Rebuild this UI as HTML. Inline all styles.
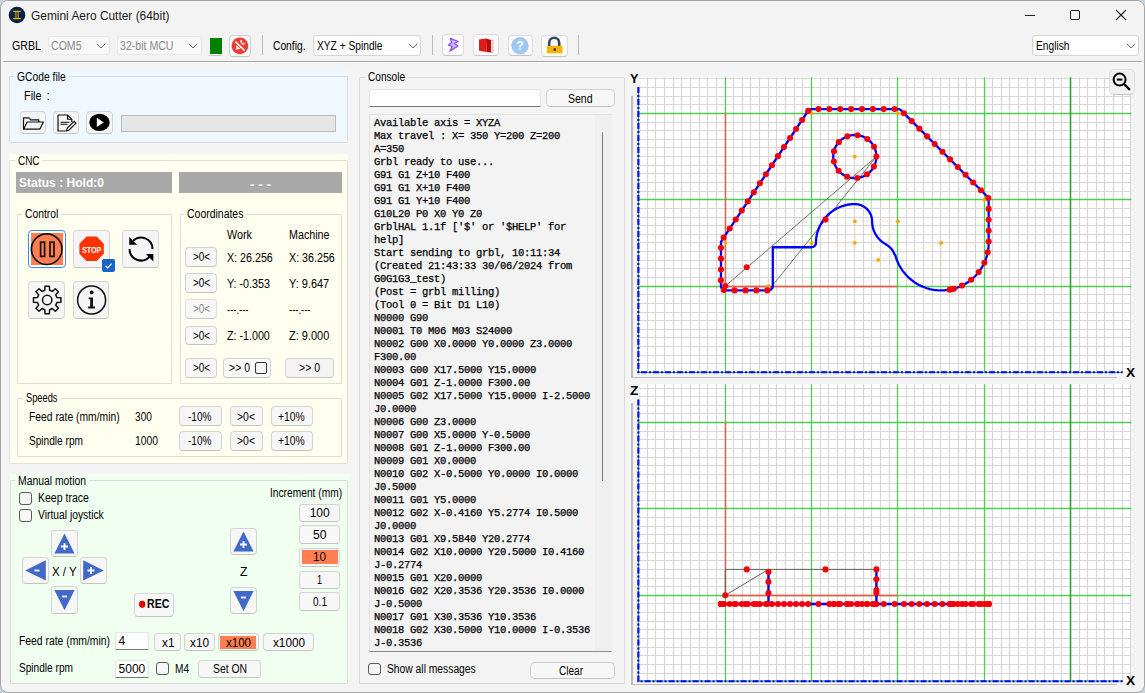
<!DOCTYPE html>
<html><head><meta charset="utf-8"><style>
html,body{margin:0;padding:0;}
body{width:1145px;height:693px;overflow:hidden;position:relative;background:#5a6a7a;font-family:"Liberation Sans",sans-serif;}
.t{position:absolute;white-space:pre;transform-origin:0 0;}
svg{overflow:visible}
</style></head><body>
<div style="position:absolute;left:0.00px;top:0.00px;width:1145.00px;height:693.00px;background:#c9d3dc;"></div>
<div style="position:absolute;left:0.00px;top:0.00px;width:1145.00px;height:693.00px;box-sizing:border-box;background:#f4f4f4;border:1px solid #a4a4a4;border-radius:8px;"></div>
<div style="position:absolute;left:1.00px;top:1.00px;width:1143.00px;height:60.00px;background:#f3f3f3;border-radius:7px 7px 0 0;"></div>
<svg style="position:absolute;left:8px;top:6px;" width="18" height="18" viewBox="0 0 18 18"><circle cx="9" cy="9" r="8.3" fill="#06204a"/><path d="M5.2 4.8h7.6v1.3h-2.2v5.8h2.2v1.3H5.2v-1.3h2.2V6.1H5.2z" fill="#f4b400"/><path d="M8.4 6.1h1.2v5.8H8.4z" fill="#06204a"/></svg>
<div class="t" style="left:31.40px;top:10.00px;font-size:12px;line-height:12px;color:#1a1a1a;transform:scaleX(0.993);">Gemini Aero Cutter (64bit)</div>
<div style="position:absolute;left:1024.50px;top:14.80px;width:10.50px;height:1.00px;background:#222;"></div>
<div style="position:absolute;left:1070.00px;top:9.80px;width:10.00px;height:10.00px;box-sizing:border-box;border:1px solid #222;border-radius:2px;"></div>
<svg style="position:absolute;left:1115px;top:9px;" width="12" height="12" viewBox="0 0 12 12"><path d="M1 1L11 11M11 1L1 11" stroke="#222" stroke-width="1.1"/></svg>
<div class="t" style="left:11.50px;top:40.00px;font-size:12px;line-height:12px;color:#000;transform:scaleX(0.884);">GRBL</div>
<div style="position:absolute;left:47.70px;top:35.90px;width:62.30px;height:18.80px;box-sizing:border-box;background:#f8f8f8;border:1px solid #e8e8e8;border-radius:3px;"></div>
<div class="t" style="left:51.00px;top:40.00px;font-size:12px;line-height:12px;color:#8a8a8a;transform:scaleX(0.880);">COM5</div>
<svg style="position:absolute;left:96.2px;top:42.8px;" width="10" height="6" viewBox="0 0 10 6"><path d="M0.8 0.8L5 5L9.2 0.8" fill="none" stroke="#666" stroke-width="1"/></svg>
<div style="position:absolute;left:116.50px;top:36.00px;width:85.50px;height:19.20px;box-sizing:border-box;background:#f8f8f8;border:1px solid #e8e8e8;border-radius:3px;"></div>
<div class="t" style="left:120.20px;top:40.00px;font-size:12px;line-height:12px;color:#8a8a8a;transform:scaleX(0.881);">32-bit MCU</div>
<svg style="position:absolute;left:188.2px;top:43.1px;" width="10" height="6" viewBox="0 0 10 6"><path d="M0.8 0.8L5 5L9.2 0.8" fill="none" stroke="#666" stroke-width="1"/></svg>
<div style="position:absolute;left:207.90px;top:35.90px;width:15.40px;height:20.10px;box-sizing:border-box;background:#ffffff;border:1px solid #f2f2f2;border-bottom-color:#c4c4c4;border-radius:3px;box-shadow:none;"></div>
<div style="position:absolute;left:209.70px;top:37.80px;width:12.60px;height:16.10px;background:#008000;"></div>
<div style="position:absolute;left:228.60px;top:35.30px;width:22.00px;height:21.30px;box-sizing:border-box;background:#fcfcfc;border:1px solid #cfcfcf;border-bottom-color:#c4c4c4;border-radius:4px;"></div>
<svg style="position:absolute;left:228.6px;top:35.3px;" width="22" height="21.3" viewBox="0 0 22 21.3"><circle cx="10.9" cy="10.8" r="8.4" fill="#ee3b33"/><path d="M6.3 6.6L15.6 15.6" stroke="#fff" stroke-width="1.5"/><path d="M7.6 10.2L6.6 14.8L11.2 13.8z" fill="#fff"/><path d="M10.8 6.8l1.6-2.2 1 1-1 1.4 1.4 1.4 1.4-1 1 1-2.2 1.6z" fill="#fff"/></svg>
<div style="position:absolute;left:262.00px;top:35.00px;width:1.20px;height:20.00px;background:#bdbdbd;"></div>
<div class="t" style="left:273.30px;top:40.00px;font-size:12px;line-height:12px;color:#000;transform:scaleX(0.855);">Config.</div>
<div style="position:absolute;left:312.90px;top:35.00px;width:108.50px;height:20.50px;box-sizing:border-box;background:#fff;border:1px solid #d4d4d4;border-radius:3px;"></div>
<div class="t" style="left:316.50px;top:40.00px;font-size:12px;line-height:12px;color:#000;transform:scaleX(0.850);">XYZ + Spindle</div>
<svg style="position:absolute;left:407.59999999999997px;top:42.75px;" width="10" height="6" viewBox="0 0 10 6"><path d="M0.8 0.8L5 5L9.2 0.8" fill="none" stroke="#666" stroke-width="1"/></svg>
<div style="position:absolute;left:431.50px;top:35.00px;width:1.20px;height:20.00px;background:#bdbdbd;"></div>
<div style="position:absolute;left:441.70px;top:34.30px;width:22.60px;height:21.30px;box-sizing:border-box;background:#fbfbfb;border:1px solid #dcdcdc;border-bottom-color:#c4c4c4;border-radius:4px;"></div>
<svg style="position:absolute;left:441.7px;top:34.3px;" width="22.6" height="21.3" viewBox="0 0 22.6 21.3"><path d="M8.5 4.3L16.2 7.6L12.6 9.6L16 12L7.8 17.2L10.2 12.6L6.4 11L9.6 8.6z" fill="#c8b8ff" stroke="#8a4dff" stroke-width="1.2" stroke-linejoin="round"/></svg>
<div style="position:absolute;left:473.00px;top:34.30px;width:26.00px;height:21.70px;box-sizing:border-box;background:#fbfbfb;border:1px solid #dcdcdc;border-bottom-color:#c4c4c4;border-radius:4px;"></div>
<svg style="position:absolute;left:476px;top:37px;" width="20" height="17" viewBox="0 0 20 17"><path d="M3 2.5L10 1.5L10.5 15L3 13.8z" fill="#e01b1b"/><path d="M10 1.5L15 3L15 15.5L10.5 15z" fill="#b80d0d"/><path d="M15 3L17 3.3L17 15.2L15 15.5z" fill="#f2f2f2" stroke="#c33" stroke-width="0.4"/></svg>
<div style="position:absolute;left:507.50px;top:34.50px;width:25.00px;height:21.50px;box-sizing:border-box;background:#fbfbfb;border:1px solid #dcdcdc;border-bottom-color:#c4c4c4;border-radius:4px;"></div>
<svg style="position:absolute;left:510px;top:36px;" width="20" height="20" viewBox="0 0 20 20"><circle cx="10" cy="9.8" r="8.2" fill="#9cc9f5" stroke="#6ea8e8" stroke-width="0.8" stroke-dasharray="1.2 0.8"/><text x="10" y="14.2" font-family="Liberation Sans" font-size="12" font-weight="bold" fill="#fff" text-anchor="middle">?</text></svg>
<div style="position:absolute;left:541.00px;top:35.00px;width:26.50px;height:21.50px;box-sizing:border-box;background:#fbfbfb;border:1px solid #dcdcdc;border-bottom-color:#c4c4c4;border-radius:4px;"></div>
<svg style="position:absolute;left:541px;top:35px;" width="26.5" height="21.5" viewBox="0 0 26.5 21.5"><path d="M8.2 11V7.8a5 5 0 0 1 10 0V11" fill="none" stroke="#34495e" stroke-width="2.6"/><rect x="6" y="10.9" width="15.5" height="7.4" fill="#f7b500"/><rect x="12.6" y="13.2" width="2.2" height="2.8" fill="#333"/></svg>
<div style="position:absolute;left:578.30px;top:35.00px;width:1.20px;height:20.00px;background:#bdbdbd;"></div>
<div style="position:absolute;left:1031.60px;top:34.70px;width:107.70px;height:21.00px;box-sizing:border-box;background:#fff;border:1px solid #d4d4d4;border-radius:3px;"></div>
<div class="t" style="left:1035.50px;top:40.00px;font-size:12px;line-height:12px;color:#000;transform:scaleX(0.851);">English</div>
<svg style="position:absolute;left:1125.5px;top:42.7px;" width="10" height="6" viewBox="0 0 10 6"><path d="M0.8 0.8L5 5L9.2 0.8" fill="none" stroke="#666" stroke-width="1"/></svg>
<div style="position:absolute;left:3.00px;top:60.80px;width:1139.00px;height:1.40px;background:#a8a8a8;"></div>
<div style="position:absolute;left:3.00px;top:62.20px;width:1139.00px;height:1.00px;background:#ffffff;"></div>
<div style="position:absolute;left:8.60px;top:70.20px;width:340.10px;height:73.00px;background:#f0f8ff;"></div>
<div style="position:absolute;left:9.40px;top:75.70px;width:339.00px;height:67.30px;box-sizing:border-box;border:1px solid #d8dde2;border-radius:1px;"></div>
<div style="position:absolute;left:14.30px;top:73.70px;width:54.70px;height:5.00px;background:#f0f8ff;"></div>
<div class="t" style="left:17.30px;top:71.00px;font-size:12px;line-height:12px;color:#000;transform:scaleX(0.859);">GCode file</div>
<div class="t" style="left:24.40px;top:90.00px;font-size:12px;line-height:12px;color:#000;transform:scaleX(0.904);">File</div>
<div class="t" style="left:46.60px;top:90.00px;font-size:12px;line-height:12px;color:#000;">:</div>
<div style="position:absolute;left:19.70px;top:111.10px;width:26.70px;height:23.20px;box-sizing:border-box;background:#f5f5f5;border:1px solid #d6d6d6;border-bottom-color:#c4c4c4;border-radius:4px;"></div>
<svg style="position:absolute;left:19.7px;top:111.1px;" width="26.7" height="23.200000000000017" viewBox="0 0 26.7 23.200000000000017"><path d="M3.5 18.2V6.8h5.5l1.6 2h8.2v2.2" fill="none" stroke="#111" stroke-width="1.2" stroke-linejoin="round"/><path d="M3.5 18.2L7.2 11h16.2L19.8 18.2z" fill="none" stroke="#111" stroke-width="1.2" stroke-linejoin="round"/></svg>
<div style="position:absolute;left:52.70px;top:111.10px;width:26.70px;height:23.20px;box-sizing:border-box;background:#f5f5f5;border:1px solid #d6d6d6;border-bottom-color:#c4c4c4;border-radius:4px;"></div>
<svg style="position:absolute;left:52.7px;top:111.1px;" width="26.700000000000003" height="23.200000000000017" viewBox="0 0 26.700000000000003 23.200000000000017"><path d="M5 4h9.5l4.3 4.3V11M5 4V20h7.5" fill="none" stroke="#111" stroke-width="1.2"/><path d="M14.5 4v4.3h4.3" fill="none" stroke="#111" stroke-width="1.1"/><path d="M7.5 11.2h9M7.5 13.2h7" stroke="#111" stroke-width="1.1"/><path d="M13.5 19.8l0.8-2.6 6.8-6.8 1.8 1.8-6.8 6.8z" fill="none" stroke="#111" stroke-width="1.2"/></svg>
<div style="position:absolute;left:86.20px;top:111.10px;width:27.00px;height:23.20px;box-sizing:border-box;background:#f5f5f5;border:1px solid #d6d6d6;border-bottom-color:#c4c4c4;border-radius:4px;"></div>
<svg style="position:absolute;left:86.2px;top:111.1px;" width="27.0" height="23.200000000000017" viewBox="0 0 27.0 23.200000000000017"><ellipse cx="13.5" cy="11.4" rx="10.2" ry="8.6" fill="#000"/><path d="M10.8 6.8L17.8 11.4L10.8 16z" fill="#fff"/></svg>
<div style="position:absolute;left:121.00px;top:115.00px;width:214.60px;height:17.30px;box-sizing:border-box;background:#e6e6e6;border:1px solid #bcbcbc;"></div>
<div style="position:absolute;left:9.40px;top:154.00px;width:339.00px;height:310.00px;background:#fffff0;"></div>
<div style="position:absolute;left:9.40px;top:160.00px;width:339.00px;height:303.80px;box-sizing:border-box;border:1px solid #e2e2d6;border-radius:1px;"></div>
<div style="position:absolute;left:14.50px;top:158.00px;width:27.50px;height:5.00px;background:#fffff0;"></div>
<div class="t" style="left:17.50px;top:155.00px;font-size:12px;line-height:12px;color:#000;transform:scaleX(0.827);">CNC</div>
<div style="position:absolute;left:16.20px;top:172.00px;width:155.80px;height:21.30px;background:#a9a9a9;"></div>
<div class="t" style="left:19.40px;top:177.00px;font-size:12px;line-height:12px;color:#fff;font-weight:bold;transform:scaleX(1.004);">Status : Hold:0</div>
<div style="position:absolute;left:178.60px;top:172.00px;width:163.00px;height:21.30px;background:#a9a9a9;"></div>
<div class="t" style="left:249.50px;top:179.00px;font-size:12px;line-height:12px;color:#fff;font-weight:bold;transform:scaleX(1.126);">- - -</div>
<div style="position:absolute;left:16.60px;top:213.50px;width:155.70px;height:170.10px;box-sizing:border-box;border:1px solid #dcdcd0;border-radius:1px;"></div>
<div style="position:absolute;left:21.60px;top:211.50px;width:39.20px;height:5.00px;background:#fffff0;"></div>
<div class="t" style="left:24.60px;top:208.00px;font-size:12px;line-height:12px;color:#000;transform:scaleX(0.858);">Control</div>
<div style="position:absolute;left:28.20px;top:230.00px;width:37.70px;height:37.50px;box-sizing:border-box;background:#fff;border:1.6px solid #3b8fe3;border-radius:4px;"></div>
<div style="position:absolute;left:31.00px;top:232.80px;width:32.00px;height:32.20px;background:#ff7f50;"></div>
<svg style="position:absolute;left:28.2px;top:230px;" width="38" height="38" viewBox="0 0 38 38"><circle cx="18.7" cy="19.2" r="15.3" fill="none" stroke="#111" stroke-width="1.7"/><rect x="12.6" y="12.2" width="4" height="14.2" fill="none" stroke="#111" stroke-width="1.7"/><rect x="22" y="12.2" width="4" height="14.2" fill="none" stroke="#111" stroke-width="1.7"/></svg>
<div style="position:absolute;left:73.40px;top:230.00px;width:37.00px;height:37.50px;box-sizing:border-box;background:#f5f5f5;border:1px solid #d6d6d6;border-bottom-color:#c4c4c4;border-radius:4px;"></div>
<svg style="position:absolute;left:73.4px;top:230px;" width="37.0" height="37.5" viewBox="0 0 37.0 37.5"><path d="M13.5 6.6h10.2l7.1 7.1v10.1l-7.1 7.1H13.5l-7.1-7.1V13.7z" fill="#ff3300"/><text x="8.9" y="22.8" font-family="Liberation Sans" font-size="8.4" font-weight="bold" fill="#fff" textLength="19.5" lengthAdjust="spacingAndGlyphs">STOP</text></svg>
<div style="position:absolute;left:101.90px;top:259.00px;width:12.80px;height:12.70px;box-sizing:border-box;background:#1a63c8;border-radius:2px;"></div>
<svg style="position:absolute;left:101.9px;top:259px;" width="13" height="13" viewBox="0 0 13 13"><path d="M3.5 6.8L5.6 8.8L9.6 4.6" fill="none" stroke="#fff" stroke-width="1.2"/></svg>
<div style="position:absolute;left:122.20px;top:230.00px;width:37.30px;height:37.50px;box-sizing:border-box;background:#f5f5f5;border:1px solid #d6d6d6;border-bottom-color:#c4c4c4;border-radius:4px;"></div>
<svg style="position:absolute;left:122.2px;top:230px;" width="37.3" height="37.5" viewBox="0 0 37.3 37.5"><path d="M10.9 10.9A11.5 11.5 0 0 1 30.5 19" fill="none" stroke="#000" stroke-width="2"/><path d="M7.5 19A11.5 11.5 0 0 0 27.6 26.6" fill="none" stroke="#000" stroke-width="2"/><path d="M7.3 7L7.3 14.7L15 14.7z" fill="#000"/><path d="M23.9 24.1L31.4 24.1L31.4 31.5z" fill="#000"/></svg>
<div style="position:absolute;left:28.20px;top:281.00px;width:37.10px;height:37.60px;box-sizing:border-box;background:#f5f5f5;border:1px solid #d6d6d6;border-bottom-color:#c4c4c4;border-radius:4px;"></div>
<svg style="position:absolute;left:28.2px;top:281px;" width="37.099999999999994" height="37.60000000000002" viewBox="0 0 37.099999999999994 37.60000000000002"><path d="M28.90 16.58 L32.93 16.83 L32.93 21.17 L28.90 21.42 L27.77 24.15 L30.45 27.17 L27.37 30.25 L24.35 27.57 L21.62 28.70 L21.37 32.73 L17.03 32.73 L16.78 28.70 L14.05 27.57 L11.03 30.25 L7.95 27.17 L10.63 24.15 L9.50 21.42 L5.47 21.17 L5.47 16.83 L9.50 16.58 L10.63 13.85 L7.95 10.83 L11.03 7.75 L14.05 10.43 L16.78 9.30 L17.03 5.27 L21.37 5.27 L21.62 9.30 L24.35 10.43 L27.37 7.75 L30.45 10.83 L27.77 13.85z" fill="none" stroke="#111" stroke-width="1.5" stroke-linejoin="round"/><circle cx="19.2" cy="19.0" r="4.7" fill="none" stroke="#111" stroke-width="1.5"/></svg>
<div style="position:absolute;left:72.50px;top:281.00px;width:36.90px;height:37.60px;box-sizing:border-box;background:#f5f5f5;border:1px solid #d6d6d6;border-bottom-color:#c4c4c4;border-radius:4px;"></div>
<svg style="position:absolute;left:72.5px;top:281px;" width="36.900000000000006" height="37.60000000000002" viewBox="0 0 36.900000000000006 37.60000000000002"><circle cx="18.6" cy="19" r="14" fill="none" stroke="#111" stroke-width="1.5"/><circle cx="18.7" cy="11.4" r="1.9" fill="#111"/><path d="M15.6 16.4h4.4v9.2h2v1.8h-6.8v-1.8h2v-7.4h-1.6z" fill="#111"/></svg>
<div style="position:absolute;left:179.60px;top:213.70px;width:162.20px;height:169.90px;box-sizing:border-box;border:1px solid #dcdcd0;border-radius:1px;"></div>
<div style="position:absolute;left:184.00px;top:211.70px;width:62.40px;height:5.00px;background:#fffff0;"></div>
<div class="t" style="left:187.00px;top:208.00px;font-size:12px;line-height:12px;color:#000;transform:scaleX(0.872);">Coordinates</div>
<div class="t" style="left:226.70px;top:229.00px;font-size:12px;line-height:12px;color:#000;transform:scaleX(0.898);">Work</div>
<div class="t" style="left:288.60px;top:229.00px;font-size:12px;line-height:12px;color:#000;transform:scaleX(0.893);">Machine</div>
<div style="position:absolute;left:185.00px;top:247.40px;width:32.40px;height:19.70px;box-sizing:border-box;background:#f7f7f7;border:1px solid #d2d2d2;border-bottom-color:#c4c4c4;border-radius:4px;"></div>
<div class="t" style="left:192.60px;top:251.00px;font-size:12px;line-height:12px;color:#000;transform:scaleX(0.831);">&gt;0&lt;</div>
<div style="position:absolute;left:185.00px;top:273.40px;width:32.40px;height:19.70px;box-sizing:border-box;background:#f7f7f7;border:1px solid #d2d2d2;border-bottom-color:#c4c4c4;border-radius:4px;"></div>
<div class="t" style="left:192.60px;top:277.00px;font-size:12px;line-height:12px;color:#000;transform:scaleX(0.831);">&gt;0&lt;</div>
<div style="position:absolute;left:185.00px;top:299.20px;width:32.40px;height:19.70px;box-sizing:border-box;background:#f7f7f7;border:1px solid #e0e0e0;border-bottom-color:#c4c4c4;border-radius:4px;"></div>
<div class="t" style="left:192.60px;top:303.00px;font-size:12px;line-height:12px;color:#8a8a8a;transform:scaleX(0.831);">&gt;0&lt;</div>
<div style="position:absolute;left:185.00px;top:325.50px;width:32.40px;height:19.70px;box-sizing:border-box;background:#f7f7f7;border:1px solid #d2d2d2;border-bottom-color:#c4c4c4;border-radius:4px;"></div>
<div class="t" style="left:192.60px;top:330.00px;font-size:12px;line-height:12px;color:#000;transform:scaleX(0.831);">&gt;0&lt;</div>
<div class="t" style="left:226.70px;top:252.00px;font-size:12px;line-height:12px;color:#000;transform:scaleX(0.891);">X: 26.256</div>
<div class="t" style="left:288.60px;top:252.00px;font-size:12px;line-height:12px;color:#000;transform:scaleX(0.891);">X: 36.256</div>
<div class="t" style="left:226.70px;top:278.00px;font-size:12px;line-height:12px;color:#000;transform:scaleX(0.895);">Y: -0.353</div>
<div class="t" style="left:288.60px;top:278.00px;font-size:12px;line-height:12px;color:#000;transform:scaleX(0.913);">Y: 9.647</div>
<div class="t" style="left:226.70px;top:304.00px;font-size:12px;line-height:12px;color:#000;transform:scaleX(0.788);">---.---</div>
<div class="t" style="left:288.60px;top:304.00px;font-size:12px;line-height:12px;color:#000;transform:scaleX(0.788);">---.---</div>
<div class="t" style="left:226.70px;top:330.00px;font-size:12px;line-height:12px;color:#000;transform:scaleX(0.891);">Z: -1.000</div>
<div class="t" style="left:288.60px;top:330.00px;font-size:12px;line-height:12px;color:#000;transform:scaleX(0.915);">Z: 9.000</div>
<div style="position:absolute;left:185.00px;top:358.40px;width:32.40px;height:19.40px;box-sizing:border-box;background:#f7f7f7;border:1px solid #d2d2d2;border-bottom-color:#c4c4c4;border-radius:4px;"></div>
<div class="t" style="left:192.60px;top:362.00px;font-size:12px;line-height:12px;color:#000;transform:scaleX(0.831);">&gt;0&lt;</div>
<div style="position:absolute;left:223.40px;top:358.40px;width:48.00px;height:19.40px;box-sizing:border-box;background:#fbfbfb;border:1px solid #d2d2d2;border-bottom-color:#c4c4c4;border-radius:4px;"></div>
<div class="t" style="left:228.50px;top:362.00px;font-size:12px;line-height:12px;color:#000;transform:scaleX(0.875);">&gt;&gt; 0</div>
<div style="position:absolute;left:255.00px;top:362.20px;width:11.50px;height:12.00px;box-sizing:border-box;border:1px solid #333;border-radius:2px;background:#f6f6f6;"></div>
<div style="position:absolute;left:285.00px;top:358.40px;width:48.60px;height:19.40px;box-sizing:border-box;background:#f4f4f4;border:1px solid #d2d2d2;border-bottom-color:#c4c4c4;border-radius:4px;"></div>
<div class="t" style="left:299.00px;top:362.00px;font-size:12px;line-height:12px;color:#000;transform:scaleX(0.875);">&gt;&gt; 0</div>
<div style="position:absolute;left:17.30px;top:397.60px;width:324.50px;height:59.20px;box-sizing:border-box;border:1px solid #dcdcd0;border-radius:1px;"></div>
<div style="position:absolute;left:23.10px;top:395.60px;width:37.50px;height:5.00px;background:#fffff0;"></div>
<div class="t" style="left:26.10px;top:392.00px;font-size:12px;line-height:12px;color:#000;transform:scaleX(0.774);">Speeds</div>
<div class="t" style="left:29.20px;top:411.00px;font-size:12px;line-height:12px;color:#000;transform:scaleX(0.860);">Feed rate (mm/min)</div>
<div class="t" style="left:135.20px;top:411.00px;font-size:12px;line-height:12px;color:#000;transform:scaleX(0.850);">300</div>
<div class="t" style="left:29.20px;top:435.00px;font-size:12px;line-height:12px;color:#000;transform:scaleX(0.843);">Spindle rpm</div>
<div class="t" style="left:135.20px;top:435.00px;font-size:12px;line-height:12px;color:#000;transform:scaleX(0.861);">1000</div>
<div style="position:absolute;left:179.20px;top:406.40px;width:42.50px;height:19.90px;box-sizing:border-box;background:#f6f6f6;border:1px solid #d4d4d4;border-bottom-color:#c4c4c4;border-radius:4px;"></div>
<div class="t" style="left:187.55px;top:411.00px;font-size:12px;line-height:12px;color:#000;transform:scaleX(0.832);">-10%</div>
<div style="position:absolute;left:230.20px;top:406.40px;width:32.40px;height:19.90px;box-sizing:border-box;background:#f6f6f6;border:1px solid #d4d4d4;border-bottom-color:#c4c4c4;border-radius:4px;"></div>
<div class="t" style="left:236.80px;top:411.00px;font-size:12px;line-height:12px;color:#000;transform:scaleX(0.870);">&gt;0&lt;</div>
<div style="position:absolute;left:271.10px;top:406.40px;width:42.40px;height:19.90px;box-sizing:border-box;background:#f6f6f6;border:1px solid #d4d4d4;border-bottom-color:#c4c4c4;border-radius:4px;"></div>
<div class="t" style="left:278.35px;top:411.00px;font-size:12px;line-height:12px;color:#000;transform:scaleX(0.860);">+10%</div>
<div style="position:absolute;left:179.20px;top:430.70px;width:42.50px;height:19.90px;box-sizing:border-box;background:#f6f6f6;border:1px solid #d4d4d4;border-bottom-color:#c4c4c4;border-radius:4px;"></div>
<div class="t" style="left:187.55px;top:435.00px;font-size:12px;line-height:12px;color:#000;transform:scaleX(0.832);">-10%</div>
<div style="position:absolute;left:230.20px;top:430.70px;width:32.40px;height:19.90px;box-sizing:border-box;background:#f6f6f6;border:1px solid #d4d4d4;border-bottom-color:#c4c4c4;border-radius:4px;"></div>
<div class="t" style="left:236.80px;top:435.00px;font-size:12px;line-height:12px;color:#000;transform:scaleX(0.870);">&gt;0&lt;</div>
<div style="position:absolute;left:271.10px;top:430.70px;width:42.40px;height:19.90px;box-sizing:border-box;background:#f6f6f6;border:1px solid #d4d4d4;border-bottom-color:#c4c4c4;border-radius:4px;"></div>
<div class="t" style="left:278.35px;top:435.00px;font-size:12px;line-height:12px;color:#000;transform:scaleX(0.860);">+10%</div>
<div style="position:absolute;left:9.60px;top:474.00px;width:339.00px;height:209.60px;background:#f0fff0;"></div>
<div style="position:absolute;left:9.60px;top:480.30px;width:338.20px;height:203.30px;box-sizing:border-box;border:1px solid #d6e0d6;border-radius:1px;"></div>
<div style="position:absolute;left:15.20px;top:478.30px;width:74.00px;height:5.00px;background:#f0fff0;"></div>
<div class="t" style="left:18.20px;top:475.00px;font-size:12px;line-height:12px;color:#000;transform:scaleX(0.864);">Manual motion</div>
<div style="position:absolute;left:18.90px;top:492.40px;width:13.20px;height:12.30px;box-sizing:border-box;background:#f6f6f6;border:1px solid #5a5a5a;border-radius:3px;"></div>
<div class="t" style="left:37.90px;top:492.00px;font-size:12px;line-height:12px;color:#000;transform:scaleX(0.877);">Keep trace</div>
<div style="position:absolute;left:18.90px;top:509.30px;width:13.20px;height:12.60px;box-sizing:border-box;background:#f6f6f6;border:1px solid #5a5a5a;border-radius:3px;"></div>
<div class="t" style="left:37.90px;top:509.00px;font-size:12px;line-height:12px;color:#000;transform:scaleX(0.860);">Virtual joystick</div>
<div style="position:absolute;left:50.50px;top:529.50px;width:27.00px;height:27.00px;box-sizing:border-box;background:#f7f7f7;border:1px solid #d4d4d4;border-bottom-color:#c4c4c4;border-radius:4px;"></div>
<svg style="position:absolute;left:50.5px;top:529.5px;" width="27.0" height="27.0" viewBox="0 0 27.0 27.0"><path d="M13.5 3.6L23.6 23.4H3.4z" fill="#4169c8"/><path d="M13.5 13v7M10 16.5h7" stroke="#fff" stroke-width="1.8"/></svg>
<div style="position:absolute;left:21.50px;top:557.30px;width:27.20px;height:27.00px;box-sizing:border-box;background:#f7f7f7;border:1px solid #d4d4d4;border-bottom-color:#c4c4c4;border-radius:4px;"></div>
<svg style="position:absolute;left:21.5px;top:557.3px;" width="27.200000000000003" height="27.0" viewBox="0 0 27.200000000000003 27.0"><path d="M3.2 13.5L23.8 3.2v20.4z" fill="#4169c8"/><path d="M12.5 13.5h5" stroke="#fff" stroke-width="1.8"/></svg>
<div style="position:absolute;left:79.50px;top:557.30px;width:27.10px;height:27.00px;box-sizing:border-box;background:#f7f7f7;border:1px solid #d4d4d4;border-bottom-color:#c4c4c4;border-radius:4px;"></div>
<svg style="position:absolute;left:79.5px;top:557.3px;" width="27.099999999999994" height="27.0" viewBox="0 0 27.099999999999994 27.0"><path d="M23.8 13.5L3.2 3.2v20.4z" fill="#4169c8"/><path d="M7.5 13.5h7M11 10v7" stroke="#fff" stroke-width="1.8"/></svg>
<div style="position:absolute;left:50.50px;top:586.30px;width:27.00px;height:27.30px;box-sizing:border-box;background:#f7f7f7;border:1px solid #d4d4d4;border-bottom-color:#c4c4c4;border-radius:4px;"></div>
<svg style="position:absolute;left:50.5px;top:586.3px;" width="27.0" height="27.300000000000068" viewBox="0 0 27.0 27.300000000000068"><path d="M3.4 4H23.6L13.5 24.2z" fill="#4169c8"/><path d="M11 10.5h5" stroke="#fff" stroke-width="1.8"/></svg>
<div class="t" style="left:51.60px;top:566.00px;font-size:12px;line-height:12px;color:#000;transform:scaleX(0.953);">X / Y</div>
<div style="position:absolute;left:134.30px;top:592.60px;width:39.90px;height:24.00px;box-sizing:border-box;background:#f7f7f7;border:1px solid #d4d4d4;border-bottom-color:#c4c4c4;border-radius:4px;"></div>
<svg style="position:absolute;left:134.3px;top:592.6px;" width="40" height="24" viewBox="0 0 40 24"><path d="M5.1 9.6l1.8-1.8h2.6l1.8 1.8v3.4l-1.8 1.8H6.9l-1.8-1.8z" fill="#e80000"/></svg>
<div class="t" style="left:147.40px;top:598.00px;font-size:12px;line-height:12px;color:#000;font-weight:bold;transform:scaleX(0.884);">REC</div>
<div style="position:absolute;left:230.30px;top:528.20px;width:27.10px;height:27.30px;box-sizing:border-box;background:#f7f7f7;border:1px solid #d4d4d4;border-bottom-color:#c4c4c4;border-radius:4px;"></div>
<svg style="position:absolute;left:230.3px;top:528.2px;" width="27.099999999999966" height="27.299999999999955" viewBox="0 0 27.099999999999966 27.299999999999955"><path d="M13.5 3.6L23.6 23.4H3.4z" fill="#4169c8"/><path d="M13.5 13v7M10 16.5h7" stroke="#fff" stroke-width="1.8"/></svg>
<div style="position:absolute;left:230.30px;top:586.60px;width:27.10px;height:27.00px;box-sizing:border-box;background:#f7f7f7;border:1px solid #d4d4d4;border-bottom-color:#c4c4c4;border-radius:4px;"></div>
<svg style="position:absolute;left:230.3px;top:586.6px;" width="27.099999999999966" height="27.0" viewBox="0 0 27.099999999999966 27.0"><path d="M3.4 4H23.6L13.5 24.2z" fill="#4169c8"/><path d="M11 10.5h5" stroke="#fff" stroke-width="1.8"/></svg>
<div class="t" style="left:240.25px;top:566.00px;font-size:12px;line-height:12px;color:#000;transform:scaleX(1.020);">Z</div>
<div class="t" style="left:269.60px;top:487.00px;font-size:12px;line-height:12px;color:#000;transform:scaleX(0.851);">Increment (mm)</div>
<div style="position:absolute;left:298.90px;top:503.50px;width:41.60px;height:18.50px;box-sizing:border-box;background:#f7f7f7;border:1px solid #d4d4d4;border-bottom-color:#c4c4c4;border-radius:4px;"></div>
<div class="t" style="left:309.70px;top:507.00px;font-size:12px;line-height:12px;color:#000;">100</div>
<div style="position:absolute;left:298.90px;top:525.40px;width:41.60px;height:18.50px;box-sizing:border-box;background:#f7f7f7;border:1px solid #d4d4d4;border-bottom-color:#c4c4c4;border-radius:4px;"></div>
<div class="t" style="left:312.95px;top:529.00px;font-size:12px;line-height:12px;color:#000;transform:scaleX(1.011);">50</div>
<div style="position:absolute;left:298.90px;top:548.00px;width:41.60px;height:18.50px;box-sizing:border-box;background:#f7f7f7;border:1px solid #d4d4d4;border-bottom-color:#c4c4c4;border-radius:4px;"></div>
<div style="position:absolute;left:301.50px;top:550.30px;width:36.40px;height:14.00px;background:#ff7f50;"></div>
<div class="t" style="left:313.20px;top:551.00px;font-size:12px;line-height:12px;color:#000;transform:scaleX(0.974);">10</div>
<div style="position:absolute;left:298.90px;top:570.50px;width:41.60px;height:18.50px;box-sizing:border-box;background:#f7f7f7;border:1px solid #d4d4d4;border-bottom-color:#c4c4c4;border-radius:4px;"></div>
<div class="t" style="left:317.20px;top:574.00px;font-size:12px;line-height:12px;color:#000;transform:scaleX(0.752);">1</div>
<div style="position:absolute;left:298.90px;top:592.40px;width:41.60px;height:18.50px;box-sizing:border-box;background:#f7f7f7;border:1px solid #d4d4d4;border-bottom-color:#c4c4c4;border-radius:4px;"></div>
<div class="t" style="left:312.70px;top:596.00px;font-size:12px;line-height:12px;color:#000;transform:scaleX(0.838);">0.1</div>
<div class="t" style="left:18.90px;top:635.00px;font-size:12px;line-height:12px;color:#000;transform:scaleX(0.864);">Feed rate (mm/min)</div>
<div style="position:absolute;left:114.80px;top:632.30px;width:34.60px;height:17.90px;box-sizing:border-box;background:#fff;border:1px solid #e4e4e4;border-bottom:1px solid #777;border-radius:3px 3px 0 0;"></div>
<div class="t" style="left:118.60px;top:635.00px;font-size:12px;line-height:12px;color:#000;">4</div>
<div style="position:absolute;left:154.10px;top:633.20px;width:27.30px;height:18.00px;box-sizing:border-box;background:#f7f7f7;border:1px solid #d4d4d4;border-bottom-color:#c4c4c4;border-radius:4px;"></div>
<div class="t" style="left:161.50px;top:637.00px;font-size:12px;line-height:12px;color:#000;transform:scaleX(0.988);">x1</div>
<div style="position:absolute;left:184.00px;top:633.20px;width:30.80px;height:18.00px;box-sizing:border-box;background:#f7f7f7;border:1px solid #d4d4d4;border-bottom-color:#c4c4c4;border-radius:4px;"></div>
<div class="t" style="left:189.90px;top:637.00px;font-size:12px;line-height:12px;color:#000;transform:scaleX(0.982);">x10</div>
<div style="position:absolute;left:217.60px;top:633.20px;width:41.20px;height:18.00px;box-sizing:border-box;background:#f7f7f7;border:1px solid #d4d4d4;border-bottom-color:#c4c4c4;border-radius:4px;"></div>
<div style="position:absolute;left:220.10px;top:635.60px;width:36.20px;height:13.20px;background:#ff7f50;"></div>
<div class="t" style="left:225.70px;top:637.00px;font-size:12px;line-height:12px;color:#000;transform:scaleX(0.962);">x100</div>
<div style="position:absolute;left:262.60px;top:633.20px;width:51.90px;height:18.00px;box-sizing:border-box;background:#f7f7f7;border:1px solid #d4d4d4;border-bottom-color:#c4c4c4;border-radius:4px;"></div>
<div class="t" style="left:272.55px;top:637.00px;font-size:12px;line-height:12px;color:#000;transform:scaleX(0.979);">x1000</div>
<div class="t" style="left:18.90px;top:662.00px;font-size:12px;line-height:12px;color:#000;transform:scaleX(0.843);">Spindle rpm</div>
<div style="position:absolute;left:114.80px;top:659.70px;width:34.60px;height:18.20px;box-sizing:border-box;background:#fff;border:1px solid #e4e4e4;border-bottom:1px solid #777;border-radius:3px 3px 0 0;"></div>
<div class="t" style="left:118.60px;top:663.00px;font-size:12px;line-height:12px;color:#000;">5000</div>
<div style="position:absolute;left:156.30px;top:662.20px;width:12.60px;height:12.50px;box-sizing:border-box;background:#f6f6f6;border:1px solid #5a5a5a;border-radius:3px;"></div>
<div class="t" style="left:175.20px;top:663.00px;font-size:12px;line-height:12px;color:#000;transform:scaleX(0.841);">M4</div>
<div style="position:absolute;left:198.10px;top:659.70px;width:62.90px;height:18.20px;box-sizing:border-box;background:#f7f7f7;border:1px solid #d4d4d4;border-bottom-color:#c4c4c4;border-radius:4px;"></div>
<div class="t" style="left:212.50px;top:663.00px;font-size:12px;line-height:12px;color:#000;transform:scaleX(0.864);">Set ON</div>
<div style="position:absolute;left:359.30px;top:76.50px;width:265.60px;height:607.70px;box-sizing:border-box;border:1px solid #dadada;border-radius:1px;"></div>
<div style="position:absolute;left:364.50px;top:74.50px;width:43.00px;height:5.00px;background:#f4f4f4;"></div>
<div class="t" style="left:367.50px;top:71.00px;font-size:12px;line-height:12px;color:#000;transform:scaleX(0.840);">Console</div>
<div style="position:absolute;left:368.50px;top:89.30px;width:172.00px;height:18.20px;box-sizing:border-box;background:#fff;border:1px solid #e4e4e4;border-bottom:1px solid #777;border-radius:3px 3px 0 0;"></div>
<div style="position:absolute;left:546.30px;top:89.10px;width:68.80px;height:17.70px;box-sizing:border-box;background:#f7f7f7;border:1px solid #d0d0d0;border-bottom-color:#c4c4c4;border-radius:5px;"></div>
<div class="t" style="left:568.45px;top:93.00px;font-size:12px;line-height:12px;color:#000;transform:scaleX(0.873);">Send</div>
<div style="position:absolute;left:369.00px;top:113.50px;width:242.70px;height:538.50px;box-sizing:border-box;background:#f3f3f3;border:1px solid #e2e2e2;border-bottom:1px solid #8a8a8a;"></div>
<div style="position:absolute;left:594.80px;top:114.50px;width:16.90px;height:536.50px;background:#efefef;"></div>
<div style="position:absolute;left:601.80px;top:132.00px;width:1.60px;height:349.00px;background:#7a7a7a;border-radius:1px;"></div>
<div class="t" style="left:374px;top:117px;font-family:'Liberation Mono',monospace;font-size:10.5px;line-height:13px;color:#000;letter-spacing:-0.3px;-webkit-text-stroke:0.25px #000;">Available axis = XYZA<br>Max travel : X= 350 Y=200 Z=200<br>A=350<br>Grbl ready to use...<br>G91 G1 Z+10 F400<br>G91 G1 X+10 F400<br>G91 G1 Y+10 F400<br>G10L20 P0 X0 Y0 Z0<br>GrblHAL 1.1f ['$' or '$HELP' for<br>help]<br>Start sending to grbl, 10:11:34<br>(Created 21:43:33 30/06/2024 from<br>G0G1G3_test)<br>(Post = grbl milling)<br>(Tool 0 = Bit D1 L10)<br>N0000 G90<br>N0001 T0 M06 M03 S24000<br>N0002 G00 X0.0000 Y0.0000 Z3.0000<br>F300.00<br>N0003 G00 X17.5000 Y15.0000<br>N0004 G01 Z-1.0000 F300.00<br>N0005 G02 X17.5000 Y15.0000 I-2.5000<br>J0.0000<br>N0006 G00 Z3.0000<br>N0007 G00 X5.0000 Y-0.5000<br>N0008 G01 Z-1.0000 F300.00<br>N0009 G01 X0.0000<br>N0010 G02 X-0.5000 Y0.0000 I0.0000<br>J0.5000<br>N0011 G01 Y5.0000<br>N0012 G02 X-0.4160 Y5.2774 I0.5000<br>J0.0000<br>N0013 G01 X9.5840 Y20.2774<br>N0014 G02 X10.0000 Y20.5000 I0.4160<br>J-0.2774<br>N0015 G01 X20.0000<br>N0016 G02 X20.3536 Y20.3536 I0.0000<br>J-0.5000<br>N0017 G01 X30.3536 Y10.3536<br>N0018 G02 X30.5000 Y10.0000 I-0.3536<br>J-0.3536</div>
<div style="position:absolute;left:367.70px;top:662.70px;width:13.20px;height:12.20px;box-sizing:border-box;background:#f6f6f6;border:1px solid #5a5a5a;border-radius:3px;"></div>
<div class="t" style="left:386.70px;top:663.00px;font-size:12px;line-height:12px;color:#000;transform:scaleX(0.858);">Show all messages</div>
<div style="position:absolute;left:529.80px;top:661.70px;width:85.40px;height:17.00px;box-sizing:border-box;background:#f7f7f7;border:1px solid #d0d0d0;border-bottom-color:#c4c4c4;border-radius:5px;"></div>
<div class="t" style="left:559.00px;top:665.00px;font-size:12px;line-height:12px;color:#000;transform:scaleX(0.836);">Clear</div>
<svg style="position:absolute;left:0px;top:0px;pointer-events:none;" width="1145" height="693" viewBox="0 0 1145 693"><rect x="640.6" y="77.2" width="490.8" height="295.1" fill="#fff"/><rect x="640.6" y="384.2" width="490.8" height="297" fill="#fff"/><path d="M647.50 77.2V372.3 M655.50 77.2V372.3 M664.50 77.2V372.3 M673.50 77.2V372.3 M681.50 77.2V372.3 M690.50 77.2V372.3 M699.50 77.2V372.3 M707.50 77.2V372.3 M716.50 77.2V372.3 M733.50 77.2V372.3 M742.50 77.2V372.3 M750.50 77.2V372.3 M759.50 77.2V372.3 M768.50 77.2V372.3 M776.50 77.2V372.3 M785.50 77.2V372.3 M794.50 77.2V372.3 M802.50 77.2V372.3 M820.50 77.2V372.3 M828.50 77.2V372.3 M837.50 77.2V372.3 M845.50 77.2V372.3 M854.50 77.2V372.3 M863.50 77.2V372.3 M871.50 77.2V372.3 M880.50 77.2V372.3 M889.50 77.2V372.3 M906.50 77.2V372.3 M914.50 77.2V372.3 M923.50 77.2V372.3 M932.50 77.2V372.3 M940.50 77.2V372.3 M949.50 77.2V372.3 M958.50 77.2V372.3 M966.50 77.2V372.3 M975.50 77.2V372.3 M992.50 77.2V372.3 M1001.50 77.2V372.3 M1009.50 77.2V372.3 M1018.50 77.2V372.3 M1027.50 77.2V372.3 M1035.50 77.2V372.3 M1044.50 77.2V372.3 M1053.50 77.2V372.3 M1061.50 77.2V372.3 M1070.50 77.2V372.3 M1079.50 77.2V372.3 M1087.50 77.2V372.3 M1096.50 77.2V372.3 M1104.50 77.2V372.3 M1113.50 77.2V372.3 M1122.50 77.2V372.3 M1130.50 77.2V372.3 M638.9 363.50H1131.4 M638.9 355.50H1131.4 M638.9 346.50H1131.4 M638.9 337.50H1131.4 M638.9 329.50H1131.4 M638.9 320.50H1131.4 M638.9 312.50H1131.4 M638.9 303.50H1131.4 M638.9 294.50H1131.4 M638.9 277.50H1131.4 M638.9 268.50H1131.4 M638.9 260.50H1131.4 M638.9 251.50H1131.4 M638.9 242.50H1131.4 M638.9 234.50H1131.4 M638.9 225.50H1131.4 M638.9 217.50H1131.4 M638.9 208.50H1131.4 M638.9 191.50H1131.4 M638.9 182.50H1131.4 M638.9 173.50H1131.4 M638.9 165.50H1131.4 M638.9 156.50H1131.4 M638.9 147.50H1131.4 M638.9 139.50H1131.4 M638.9 130.50H1131.4 M638.9 122.50H1131.4 M638.9 104.50H1131.4 M638.9 96.50H1131.4 M638.9 87.50H1131.4 M638.9 78.50H1131.4" stroke="#d7d7d7" stroke-width="1.2" fill="none"/><path d="M725.50 77.2V372.3 M811.50 77.2V372.3 M897.50 77.2V372.3 M984.50 77.2V372.3 M638.9 286.50H1131.4 M638.9 199.50H1131.4 M638.9 113.50H1131.4" stroke="#50cc50" stroke-width="1.3" fill="none"/><path d="M1070.50 77.2V372.3" stroke="#2aa02a" stroke-width="1.5"/><path d="M725.50 113.50V286.50H897.50" stroke="#ff5050" stroke-width="1.3" fill="none"/><path d="M811.65 242.93H854.82V221.34H898.00L878.14 259.94L941.17 242.93H988.67M941.17 242.93V290.42M833.24 156.58H876.41" stroke="#ffc870" stroke-width="0.8" stroke-dasharray="2 2" fill="none" opacity="0.65"/><circle cx="811.65" cy="242.93" r="1.9" fill="#ffa500"/><circle cx="854.82" cy="221.34" r="1.9" fill="#ffa500"/><circle cx="854.82" cy="242.93" r="1.9" fill="#ffa500"/><circle cx="898.00" cy="221.34" r="1.9" fill="#ffa500"/><circle cx="878.14" cy="259.94" r="1.9" fill="#ffa500"/><circle cx="941.17" cy="242.93" r="1.9" fill="#ffa500"/><circle cx="984.35" cy="199.75" r="1.9" fill="#ffa500"/><circle cx="768.47" cy="286.10" r="1.9" fill="#ffa500"/><circle cx="725.30" cy="242.93" r="1.9" fill="#ffa500"/><circle cx="811.65" cy="113.40" r="1.9" fill="#ffa500"/><circle cx="898.00" cy="113.40" r="1.9" fill="#ffa500"/><circle cx="854.82" cy="156.58" r="1.9" fill="#ffa500"/><circle cx="725.30" cy="286.10" r="1.9" fill="#ffa500"/><path d="M725.30 286.10L876.41 156.58L768.47 290.42" stroke="#606060" stroke-width="0.9" fill="none"/><path d="M768.47 290.42 L725.30 290.42 L723.65 290.09 L722.25 289.15 L721.31 287.75 L720.98 286.10 L720.98 242.93 L721.03 242.29 L721.17 241.67 L721.40 241.08 L721.71 240.53 L808.06 111.00 L808.75 110.20 L809.61 109.59 L810.60 109.21 L811.65 109.08 L898.00 109.08 L898.84 109.17 L899.65 109.41 L900.40 109.81 L901.05 110.35 L987.40 196.70 L987.94 197.35 L988.34 198.10 L988.58 198.91 L988.67 199.75 L988.67 242.93 L988.64 244.39 L988.58 245.85 L988.46 247.31 L988.31 248.76 L988.11 250.21 L987.86 251.65 L987.57 253.09 L987.23 254.51 L986.85 255.92 L986.43 257.32 L985.97 258.71 L985.46 260.08 L984.91 261.44 L984.32 262.77 L983.69 264.09 L983.02 265.39 L982.30 266.67 L981.55 267.93 L980.76 269.16 L979.94 270.36 L979.07 271.55 L978.18 272.70 L977.24 273.82 L976.27 274.92 L975.27 275.99 L974.24 277.02 L973.17 278.02 L972.07 278.99 L970.95 279.93 L969.80 280.82 L968.61 281.69 L967.41 282.51 L966.18 283.30 L964.92 284.05 L963.64 284.77 L962.34 285.44 L961.02 286.07 L959.69 286.66 L958.33 287.21 L956.96 287.72 L955.57 288.18 L954.17 288.60 L952.76 288.98 L951.34 289.32 L949.90 289.61 L948.46 289.86 L947.01 290.06 L945.56 290.21 L944.10 290.33 L942.64 290.39 L941.17 290.42 L939.73 290.40 L938.29 290.33 L936.85 290.22 L935.41 290.07 L933.98 289.87 L932.56 289.63 L931.14 289.35 L929.73 289.02 L928.34 288.65 L926.95 288.24 L925.58 287.78 L924.22 287.29 L922.88 286.75 L921.56 286.18 L920.25 285.56 L918.96 284.90 L917.70 284.21 L916.45 283.48 L915.23 282.71 L914.03 281.90 L912.86 281.05 L911.71 280.18 L910.60 279.26 L909.50 278.32 L908.44 277.34 L907.41 276.33 L906.41 275.28 L905.44 274.21 L904.51 273.11 L903.61 271.98 L902.74 270.82 L901.91 269.64 L901.12 268.44 L900.36 267.21 L899.64 265.95 L898.96 264.68 L898.32 263.39 L897.71 262.07 L897.15 260.74 L896.63 259.40 L896.15 258.03 L895.71 256.66 L895.31 255.27 L894.32 253.89 L893.69 252.43 L892.93 251.03 L892.05 249.70 L891.05 248.46 L889.94 247.32 L888.72 246.29 L887.42 245.37 L886.04 244.58 L884.84 243.65 L883.58 242.86 L882.36 241.99 L881.20 241.05 L880.09 240.05 L879.04 238.99 L878.05 237.87 L877.13 236.69 L876.28 235.46 L875.51 234.19 L874.80 232.87 L874.18 231.51 L873.63 230.12 L873.16 228.70 L872.78 227.26 L872.48 225.80 L872.27 224.32 L872.14 222.83 L872.09 221.34 L872.03 219.83 L871.83 218.34 L871.51 216.87 L871.05 215.43 L870.48 214.04 L869.78 212.70 L868.97 211.43 L868.05 210.24 L867.04 209.13 L865.93 208.11 L864.73 207.19 L863.46 206.38 L862.12 205.69 L860.73 205.11 L859.29 204.66 L857.82 204.33 L856.33 204.13 L854.82 204.07 L853.37 204.09 L851.92 204.18 L850.47 204.31 L849.03 204.50 L847.60 204.74 L846.18 205.04 L844.77 205.39 L843.37 205.79 L841.99 206.25 L840.63 206.75 L839.29 207.31 L837.97 207.92 L836.67 208.57 L835.40 209.27 L834.15 210.02 L832.94 210.82 L831.75 211.66 L830.60 212.54 L829.48 213.47 L828.40 214.44 L827.35 215.45 L826.34 216.50 L825.37 217.58 L824.44 218.70 L823.56 219.85 L822.72 221.04 L821.92 222.25 L821.17 223.50 L820.47 224.77 L819.82 226.07 L819.21 227.39 L818.65 228.73 L818.15 230.09 L817.69 231.47 L817.29 232.87 L816.94 234.28 L816.64 235.70 L816.40 237.13 L816.21 238.57 L816.08 240.02 L815.99 241.47 L815.97 242.93 L815.64 244.58 L814.70 245.98 L813.30 246.91 L811.65 247.24 L772.79 247.24 L772.79 286.10 L772.46 287.75 L771.53 289.15 L770.13 290.09 L768.47 290.42" stroke="#0000ff" stroke-width="2.3" fill="none" stroke-linejoin="round"/><path d="M876.41 156.58 L876.29 158.83 L875.94 161.06 L875.36 163.25 L874.55 165.36 L873.52 167.37 L872.29 169.26 L870.87 171.02 L869.27 172.62 L867.51 174.04 L865.62 175.27 L863.61 176.30 L861.50 177.11 L859.31 177.69 L857.08 178.04 L854.82 178.16 L852.57 178.04 L850.34 177.69 L848.15 177.11 L846.04 176.30 L844.03 175.27 L842.14 174.04 L840.38 172.62 L838.78 171.02 L837.36 169.26 L836.13 167.37 L835.10 165.36 L834.29 163.25 L833.71 161.06 L833.36 158.83 L833.24 156.58 L833.36 154.32 L833.71 152.09 L834.29 149.90 L835.10 147.79 L836.13 145.78 L837.36 143.89 L838.78 142.13 L840.38 140.53 L842.14 139.11 L844.03 137.88 L846.04 136.85 L848.15 136.04 L850.34 135.46 L852.57 135.11 L854.82 134.99 L857.08 135.11 L859.31 135.46 L861.50 136.04 L863.61 136.85 L865.62 137.88 L867.51 139.11 L869.27 140.53 L870.87 142.13 L872.29 143.89 L873.52 145.78 L874.55 147.79 L875.36 149.90 L875.94 152.09 L876.29 154.32 L876.41 156.57" stroke="#0000ff" stroke-width="2.3" fill="none"/><circle cx="767.27" cy="290.42" r="3.05" fill="#ff0000"/><circle cx="767.27" cy="290.42" r="0.9" fill="#9a0a5a"/><circle cx="756.39" cy="290.42" r="3.05" fill="#ff0000"/><circle cx="756.39" cy="290.42" r="0.9" fill="#9a0a5a"/><circle cx="745.51" cy="290.42" r="3.05" fill="#ff0000"/><circle cx="745.51" cy="290.42" r="0.9" fill="#9a0a5a"/><circle cx="734.63" cy="290.42" r="3.05" fill="#ff0000"/><circle cx="734.63" cy="290.42" r="0.9" fill="#9a0a5a"/><circle cx="723.78" cy="290.11" r="3.05" fill="#ff0000"/><circle cx="723.78" cy="290.11" r="0.9" fill="#9a0a5a"/><circle cx="720.98" cy="280.40" r="3.05" fill="#ff0000"/><circle cx="720.98" cy="280.40" r="0.9" fill="#9a0a5a"/><circle cx="720.98" cy="269.52" r="3.05" fill="#ff0000"/><circle cx="720.98" cy="269.52" r="0.9" fill="#9a0a5a"/><circle cx="720.98" cy="258.64" r="3.05" fill="#ff0000"/><circle cx="720.98" cy="258.64" r="0.9" fill="#9a0a5a"/><circle cx="720.98" cy="247.76" r="3.05" fill="#ff0000"/><circle cx="720.98" cy="247.76" r="0.9" fill="#9a0a5a"/><circle cx="723.65" cy="237.61" r="3.05" fill="#ff0000"/><circle cx="723.65" cy="237.61" r="0.9" fill="#9a0a5a"/><circle cx="729.69" cy="228.56" r="3.05" fill="#ff0000"/><circle cx="729.69" cy="228.56" r="0.9" fill="#9a0a5a"/><circle cx="735.72" cy="219.51" r="3.05" fill="#ff0000"/><circle cx="735.72" cy="219.51" r="0.9" fill="#9a0a5a"/><circle cx="741.76" cy="210.46" r="3.05" fill="#ff0000"/><circle cx="741.76" cy="210.46" r="0.9" fill="#9a0a5a"/><circle cx="747.79" cy="201.40" r="3.05" fill="#ff0000"/><circle cx="747.79" cy="201.40" r="0.9" fill="#9a0a5a"/><circle cx="753.83" cy="192.35" r="3.05" fill="#ff0000"/><circle cx="753.83" cy="192.35" r="0.9" fill="#9a0a5a"/><circle cx="759.86" cy="183.30" r="3.05" fill="#ff0000"/><circle cx="759.86" cy="183.30" r="0.9" fill="#9a0a5a"/><circle cx="765.90" cy="174.24" r="3.05" fill="#ff0000"/><circle cx="765.90" cy="174.24" r="0.9" fill="#9a0a5a"/><circle cx="771.93" cy="165.19" r="3.05" fill="#ff0000"/><circle cx="771.93" cy="165.19" r="0.9" fill="#9a0a5a"/><circle cx="777.97" cy="156.14" r="3.05" fill="#ff0000"/><circle cx="777.97" cy="156.14" r="0.9" fill="#9a0a5a"/><circle cx="784.00" cy="147.09" r="3.05" fill="#ff0000"/><circle cx="784.00" cy="147.09" r="0.9" fill="#9a0a5a"/><circle cx="790.04" cy="138.03" r="3.05" fill="#ff0000"/><circle cx="790.04" cy="138.03" r="0.9" fill="#9a0a5a"/><circle cx="796.07" cy="128.98" r="3.05" fill="#ff0000"/><circle cx="796.07" cy="128.98" r="0.9" fill="#9a0a5a"/><circle cx="802.11" cy="119.93" r="3.05" fill="#ff0000"/><circle cx="802.11" cy="119.93" r="0.9" fill="#9a0a5a"/><circle cx="808.16" cy="110.89" r="3.05" fill="#ff0000"/><circle cx="808.16" cy="110.89" r="0.9" fill="#9a0a5a"/><circle cx="818.45" cy="109.08" r="3.05" fill="#ff0000"/><circle cx="818.45" cy="109.08" r="0.9" fill="#9a0a5a"/><circle cx="829.33" cy="109.08" r="3.05" fill="#ff0000"/><circle cx="829.33" cy="109.08" r="0.9" fill="#9a0a5a"/><circle cx="840.21" cy="109.08" r="3.05" fill="#ff0000"/><circle cx="840.21" cy="109.08" r="0.9" fill="#9a0a5a"/><circle cx="851.09" cy="109.08" r="3.05" fill="#ff0000"/><circle cx="851.09" cy="109.08" r="0.9" fill="#9a0a5a"/><circle cx="861.97" cy="109.08" r="3.05" fill="#ff0000"/><circle cx="861.97" cy="109.08" r="0.9" fill="#9a0a5a"/><circle cx="872.85" cy="109.08" r="3.05" fill="#ff0000"/><circle cx="872.85" cy="109.08" r="0.9" fill="#9a0a5a"/><circle cx="883.73" cy="109.08" r="3.05" fill="#ff0000"/><circle cx="883.73" cy="109.08" r="0.9" fill="#9a0a5a"/><circle cx="894.61" cy="109.08" r="3.05" fill="#ff0000"/><circle cx="894.61" cy="109.08" r="0.9" fill="#9a0a5a"/><circle cx="903.96" cy="113.25" r="3.05" fill="#ff0000"/><circle cx="903.96" cy="113.25" r="0.9" fill="#9a0a5a"/><circle cx="911.65" cy="120.95" r="3.05" fill="#ff0000"/><circle cx="911.65" cy="120.95" r="0.9" fill="#9a0a5a"/><circle cx="919.35" cy="128.64" r="3.05" fill="#ff0000"/><circle cx="919.35" cy="128.64" r="0.9" fill="#9a0a5a"/><circle cx="927.04" cy="136.33" r="3.05" fill="#ff0000"/><circle cx="927.04" cy="136.33" r="0.9" fill="#9a0a5a"/><circle cx="934.73" cy="144.03" r="3.05" fill="#ff0000"/><circle cx="934.73" cy="144.03" r="0.9" fill="#9a0a5a"/><circle cx="942.43" cy="151.72" r="3.05" fill="#ff0000"/><circle cx="942.43" cy="151.72" r="0.9" fill="#9a0a5a"/><circle cx="950.12" cy="159.41" r="3.05" fill="#ff0000"/><circle cx="950.12" cy="159.41" r="0.9" fill="#9a0a5a"/><circle cx="957.81" cy="167.11" r="3.05" fill="#ff0000"/><circle cx="957.81" cy="167.11" r="0.9" fill="#9a0a5a"/><circle cx="965.51" cy="174.80" r="3.05" fill="#ff0000"/><circle cx="965.51" cy="174.80" r="0.9" fill="#9a0a5a"/><circle cx="973.20" cy="182.49" r="3.05" fill="#ff0000"/><circle cx="973.20" cy="182.49" r="0.9" fill="#9a0a5a"/><circle cx="980.89" cy="190.19" r="3.05" fill="#ff0000"/><circle cx="980.89" cy="190.19" r="0.9" fill="#9a0a5a"/><circle cx="988.33" cy="198.08" r="3.05" fill="#ff0000"/><circle cx="988.33" cy="198.08" r="0.9" fill="#9a0a5a"/><circle cx="988.67" cy="208.92" r="3.05" fill="#ff0000"/><circle cx="988.67" cy="208.92" r="0.9" fill="#9a0a5a"/><circle cx="988.67" cy="219.80" r="3.05" fill="#ff0000"/><circle cx="988.67" cy="219.80" r="0.9" fill="#9a0a5a"/><circle cx="988.67" cy="230.68" r="3.05" fill="#ff0000"/><circle cx="988.67" cy="230.68" r="0.9" fill="#9a0a5a"/><circle cx="988.67" cy="241.56" r="3.05" fill="#ff0000"/><circle cx="988.67" cy="241.56" r="0.9" fill="#9a0a5a"/><circle cx="987.71" cy="252.37" r="3.05" fill="#ff0000"/><circle cx="987.71" cy="252.37" r="0.9" fill="#9a0a5a"/><circle cx="984.35" cy="262.70" r="3.05" fill="#ff0000"/><circle cx="984.35" cy="262.70" r="0.9" fill="#9a0a5a"/><circle cx="978.73" cy="271.98" r="3.05" fill="#ff0000"/><circle cx="978.73" cy="271.98" r="0.9" fill="#9a0a5a"/><circle cx="971.15" cy="279.76" r="3.05" fill="#ff0000"/><circle cx="971.15" cy="279.76" r="0.9" fill="#9a0a5a"/><circle cx="962.00" cy="285.60" r="3.05" fill="#ff0000"/><circle cx="962.00" cy="285.60" r="0.9" fill="#9a0a5a"/><circle cx="952.02" cy="289.15" r="3.05" fill="#ff0000"/><circle cx="952.02" cy="289.15" r="0.9" fill="#9a0a5a"/><circle cx="949.70" cy="289.65" r="3.05" fill="#ff0000"/><circle cx="949.70" cy="289.65" r="0.9" fill="#9a0a5a"/><circle cx="953.86" cy="288.69" r="3.05" fill="#ff0000"/><circle cx="953.86" cy="288.69" r="0.9" fill="#9a0a5a"/><circle cx="876.41" cy="156.58" r="3.05" fill="#ff0000"/><circle cx="876.41" cy="156.58" r="0.9" fill="#9a0a5a"/><circle cx="873.91" cy="166.61" r="3.05" fill="#ff0000"/><circle cx="873.91" cy="166.61" r="0.9" fill="#9a0a5a"/><circle cx="867.04" cy="174.34" r="3.05" fill="#ff0000"/><circle cx="867.04" cy="174.34" r="0.9" fill="#9a0a5a"/><circle cx="857.37" cy="178.00" r="3.05" fill="#ff0000"/><circle cx="857.37" cy="178.00" r="0.9" fill="#9a0a5a"/><circle cx="847.11" cy="176.70" r="3.05" fill="#ff0000"/><circle cx="847.11" cy="176.70" r="0.9" fill="#9a0a5a"/><circle cx="838.61" cy="170.81" r="3.05" fill="#ff0000"/><circle cx="838.61" cy="170.81" r="0.9" fill="#9a0a5a"/><circle cx="833.86" cy="161.62" r="3.05" fill="#ff0000"/><circle cx="833.86" cy="161.62" r="0.9" fill="#9a0a5a"/><circle cx="833.92" cy="151.28" r="3.05" fill="#ff0000"/><circle cx="833.92" cy="151.28" r="0.9" fill="#9a0a5a"/><circle cx="838.77" cy="142.14" r="3.05" fill="#ff0000"/><circle cx="838.77" cy="142.14" r="0.9" fill="#9a0a5a"/><circle cx="847.34" cy="136.36" r="3.05" fill="#ff0000"/><circle cx="847.34" cy="136.36" r="0.9" fill="#9a0a5a"/><circle cx="857.62" cy="135.19" r="3.05" fill="#ff0000"/><circle cx="857.62" cy="135.19" r="0.9" fill="#9a0a5a"/><circle cx="867.26" cy="138.94" r="3.05" fill="#ff0000"/><circle cx="867.26" cy="138.94" r="0.9" fill="#9a0a5a"/><circle cx="874.02" cy="146.76" r="3.05" fill="#ff0000"/><circle cx="874.02" cy="146.76" r="0.9" fill="#9a0a5a"/><circle cx="725.30" cy="286.10" r="3.05" fill="#ff0000"/><circle cx="725.30" cy="286.10" r="0.9" fill="#9a0a5a"/><circle cx="746.71" cy="267.28" r="3.05" fill="#ff0000"/><circle cx="746.71" cy="267.28" r="0.9" fill="#9a0a5a"/><circle cx="825.47" cy="219.61" r="3.05" fill="#ff0000"/><circle cx="825.47" cy="219.61" r="0.9" fill="#9a0a5a"/><path d="M638.4 86.9V372.3H1122.6" stroke="#38b038" stroke-width="1.2" fill="none"/><path d="M638.4 86.9V372.3H1122.6" stroke="#0000ff" stroke-width="2.1" fill="none" stroke-dasharray="6 2 2 2"/><path d="M647.50 384.2V681.2 M655.50 384.2V681.2 M664.50 384.2V681.2 M673.50 384.2V681.2 M681.50 384.2V681.2 M690.50 384.2V681.2 M699.50 384.2V681.2 M707.50 384.2V681.2 M716.50 384.2V681.2 M733.50 384.2V681.2 M742.50 384.2V681.2 M750.50 384.2V681.2 M759.50 384.2V681.2 M768.50 384.2V681.2 M776.50 384.2V681.2 M785.50 384.2V681.2 M794.50 384.2V681.2 M802.50 384.2V681.2 M820.50 384.2V681.2 M828.50 384.2V681.2 M837.50 384.2V681.2 M845.50 384.2V681.2 M854.50 384.2V681.2 M863.50 384.2V681.2 M871.50 384.2V681.2 M880.50 384.2V681.2 M889.50 384.2V681.2 M906.50 384.2V681.2 M914.50 384.2V681.2 M923.50 384.2V681.2 M932.50 384.2V681.2 M940.50 384.2V681.2 M949.50 384.2V681.2 M958.50 384.2V681.2 M966.50 384.2V681.2 M975.50 384.2V681.2 M992.50 384.2V681.2 M1001.50 384.2V681.2 M1009.50 384.2V681.2 M1018.50 384.2V681.2 M1027.50 384.2V681.2 M1035.50 384.2V681.2 M1044.50 384.2V681.2 M1053.50 384.2V681.2 M1061.50 384.2V681.2 M1070.50 384.2V681.2 M1079.50 384.2V681.2 M1087.50 384.2V681.2 M1096.50 384.2V681.2 M1104.50 384.2V681.2 M1113.50 384.2V681.2 M1122.50 384.2V681.2 M1130.50 384.2V681.2 M638.9 673.50H1131.4 M638.9 664.50H1131.4 M638.9 655.50H1131.4 M638.9 647.50H1131.4 M638.9 638.50H1131.4 M638.9 629.50H1131.4 M638.9 621.50H1131.4 M638.9 612.50H1131.4 M638.9 603.50H1131.4 M638.9 586.50H1131.4 M638.9 578.50H1131.4 M638.9 569.50H1131.4 M638.9 560.50H1131.4 M638.9 552.50H1131.4 M638.9 543.50H1131.4 M638.9 534.50H1131.4 M638.9 526.50H1131.4 M638.9 517.50H1131.4 M638.9 500.50H1131.4 M638.9 491.50H1131.4 M638.9 483.50H1131.4 M638.9 474.50H1131.4 M638.9 465.50H1131.4 M638.9 457.50H1131.4 M638.9 448.50H1131.4 M638.9 439.50H1131.4 M638.9 431.50H1131.4 M638.9 413.50H1131.4 M638.9 405.50H1131.4 M638.9 396.50H1131.4 M638.9 388.50H1131.4" stroke="#d7d7d7" stroke-width="1.2" fill="none"/><path d="M725.50 384.2V681.2 M811.50 384.2V681.2 M897.50 384.2V681.2 M984.50 384.2V681.2 M638.9 595.50H1131.4 M638.9 508.50H1131.4 M638.9 422.50H1131.4" stroke="#50cc50" stroke-width="1.3" fill="none"/><path d="M1070.50 384.2V681.2" stroke="#2aa02a" stroke-width="1.5"/><path d="M725.50 422.50V595.50H897.50" stroke="#ff5050" stroke-width="1.3" fill="none"/><path d="M725.30 595.30V569.39H876.41M725.30 595.30L768.47 569.39" stroke="#606060" stroke-width="1" fill="none"/><path d="M768.47 569.39V603.93M876.41 569.39V603.93M720.12 603.93H989.53" stroke="#0000ff" stroke-width="2.4" fill="none"/><circle cx="725.30" cy="595.30" r="3.05" fill="#ff0000"/><circle cx="725.30" cy="595.30" r="0.9" fill="#9a0a5a"/><circle cx="746.71" cy="569.39" r="3.05" fill="#ff0000"/><circle cx="746.71" cy="569.39" r="0.9" fill="#9a0a5a"/><circle cx="825.47" cy="569.39" r="3.05" fill="#ff0000"/><circle cx="825.47" cy="569.39" r="0.9" fill="#9a0a5a"/><circle cx="876.41" cy="569.39" r="3.05" fill="#ff0000"/><circle cx="876.41" cy="569.39" r="0.9" fill="#9a0a5a"/><circle cx="876.41" cy="579.33" r="3.05" fill="#ff0000"/><circle cx="876.41" cy="579.33" r="0.9" fill="#9a0a5a"/><circle cx="876.41" cy="590.12" r="3.05" fill="#ff0000"/><circle cx="876.41" cy="590.12" r="0.9" fill="#9a0a5a"/><circle cx="876.41" cy="592.71" r="3.05" fill="#ff0000"/><circle cx="876.41" cy="592.71" r="0.9" fill="#9a0a5a"/><circle cx="768.47" cy="571.99" r="3.05" fill="#ff0000"/><circle cx="768.47" cy="571.99" r="0.9" fill="#9a0a5a"/><circle cx="768.47" cy="581.92" r="3.05" fill="#ff0000"/><circle cx="768.47" cy="581.92" r="0.9" fill="#9a0a5a"/><circle cx="768.47" cy="593.14" r="3.05" fill="#ff0000"/><circle cx="768.47" cy="593.14" r="0.9" fill="#9a0a5a"/><circle cx="767.27" cy="603.93" r="3.05" fill="#ff0000"/><circle cx="767.27" cy="603.93" r="0.9" fill="#9a0a5a"/><circle cx="756.39" cy="603.93" r="3.05" fill="#ff0000"/><circle cx="756.39" cy="603.93" r="0.9" fill="#9a0a5a"/><circle cx="745.51" cy="603.93" r="3.05" fill="#ff0000"/><circle cx="745.51" cy="603.93" r="0.9" fill="#9a0a5a"/><circle cx="734.63" cy="603.93" r="3.05" fill="#ff0000"/><circle cx="734.63" cy="603.93" r="0.9" fill="#9a0a5a"/><circle cx="723.78" cy="603.93" r="3.05" fill="#ff0000"/><circle cx="723.78" cy="603.93" r="0.9" fill="#9a0a5a"/><circle cx="720.98" cy="603.93" r="3.05" fill="#ff0000"/><circle cx="720.98" cy="603.93" r="0.9" fill="#9a0a5a"/><circle cx="720.98" cy="603.93" r="3.05" fill="#ff0000"/><circle cx="720.98" cy="603.93" r="0.9" fill="#9a0a5a"/><circle cx="720.98" cy="603.93" r="3.05" fill="#ff0000"/><circle cx="720.98" cy="603.93" r="0.9" fill="#9a0a5a"/><circle cx="720.98" cy="603.93" r="3.05" fill="#ff0000"/><circle cx="720.98" cy="603.93" r="0.9" fill="#9a0a5a"/><circle cx="723.65" cy="603.93" r="3.05" fill="#ff0000"/><circle cx="723.65" cy="603.93" r="0.9" fill="#9a0a5a"/><circle cx="729.69" cy="603.93" r="3.05" fill="#ff0000"/><circle cx="729.69" cy="603.93" r="0.9" fill="#9a0a5a"/><circle cx="735.72" cy="603.93" r="3.05" fill="#ff0000"/><circle cx="735.72" cy="603.93" r="0.9" fill="#9a0a5a"/><circle cx="741.76" cy="603.93" r="3.05" fill="#ff0000"/><circle cx="741.76" cy="603.93" r="0.9" fill="#9a0a5a"/><circle cx="747.79" cy="603.93" r="3.05" fill="#ff0000"/><circle cx="747.79" cy="603.93" r="0.9" fill="#9a0a5a"/><circle cx="753.83" cy="603.93" r="3.05" fill="#ff0000"/><circle cx="753.83" cy="603.93" r="0.9" fill="#9a0a5a"/><circle cx="759.86" cy="603.93" r="3.05" fill="#ff0000"/><circle cx="759.86" cy="603.93" r="0.9" fill="#9a0a5a"/><circle cx="765.90" cy="603.93" r="3.05" fill="#ff0000"/><circle cx="765.90" cy="603.93" r="0.9" fill="#9a0a5a"/><circle cx="771.93" cy="603.93" r="3.05" fill="#ff0000"/><circle cx="771.93" cy="603.93" r="0.9" fill="#9a0a5a"/><circle cx="777.97" cy="603.93" r="3.05" fill="#ff0000"/><circle cx="777.97" cy="603.93" r="0.9" fill="#9a0a5a"/><circle cx="784.00" cy="603.93" r="3.05" fill="#ff0000"/><circle cx="784.00" cy="603.93" r="0.9" fill="#9a0a5a"/><circle cx="790.04" cy="603.93" r="3.05" fill="#ff0000"/><circle cx="790.04" cy="603.93" r="0.9" fill="#9a0a5a"/><circle cx="796.07" cy="603.93" r="3.05" fill="#ff0000"/><circle cx="796.07" cy="603.93" r="0.9" fill="#9a0a5a"/><circle cx="802.11" cy="603.93" r="3.05" fill="#ff0000"/><circle cx="802.11" cy="603.93" r="0.9" fill="#9a0a5a"/><circle cx="808.16" cy="603.93" r="3.05" fill="#ff0000"/><circle cx="808.16" cy="603.93" r="0.9" fill="#9a0a5a"/><circle cx="818.45" cy="603.93" r="3.05" fill="#ff0000"/><circle cx="818.45" cy="603.93" r="0.9" fill="#9a0a5a"/><circle cx="829.33" cy="603.93" r="3.05" fill="#ff0000"/><circle cx="829.33" cy="603.93" r="0.9" fill="#9a0a5a"/><circle cx="840.21" cy="603.93" r="3.05" fill="#ff0000"/><circle cx="840.21" cy="603.93" r="0.9" fill="#9a0a5a"/><circle cx="851.09" cy="603.93" r="3.05" fill="#ff0000"/><circle cx="851.09" cy="603.93" r="0.9" fill="#9a0a5a"/><circle cx="861.97" cy="603.93" r="3.05" fill="#ff0000"/><circle cx="861.97" cy="603.93" r="0.9" fill="#9a0a5a"/><circle cx="872.85" cy="603.93" r="3.05" fill="#ff0000"/><circle cx="872.85" cy="603.93" r="0.9" fill="#9a0a5a"/><circle cx="883.73" cy="603.93" r="3.05" fill="#ff0000"/><circle cx="883.73" cy="603.93" r="0.9" fill="#9a0a5a"/><circle cx="894.61" cy="603.93" r="3.05" fill="#ff0000"/><circle cx="894.61" cy="603.93" r="0.9" fill="#9a0a5a"/><circle cx="903.96" cy="603.93" r="3.05" fill="#ff0000"/><circle cx="903.96" cy="603.93" r="0.9" fill="#9a0a5a"/><circle cx="911.65" cy="603.93" r="3.05" fill="#ff0000"/><circle cx="911.65" cy="603.93" r="0.9" fill="#9a0a5a"/><circle cx="919.35" cy="603.93" r="3.05" fill="#ff0000"/><circle cx="919.35" cy="603.93" r="0.9" fill="#9a0a5a"/><circle cx="927.04" cy="603.93" r="3.05" fill="#ff0000"/><circle cx="927.04" cy="603.93" r="0.9" fill="#9a0a5a"/><circle cx="934.73" cy="603.93" r="3.05" fill="#ff0000"/><circle cx="934.73" cy="603.93" r="0.9" fill="#9a0a5a"/><circle cx="942.43" cy="603.93" r="3.05" fill="#ff0000"/><circle cx="942.43" cy="603.93" r="0.9" fill="#9a0a5a"/><circle cx="950.12" cy="603.93" r="3.05" fill="#ff0000"/><circle cx="950.12" cy="603.93" r="0.9" fill="#9a0a5a"/><circle cx="957.81" cy="603.93" r="3.05" fill="#ff0000"/><circle cx="957.81" cy="603.93" r="0.9" fill="#9a0a5a"/><circle cx="965.51" cy="603.93" r="3.05" fill="#ff0000"/><circle cx="965.51" cy="603.93" r="0.9" fill="#9a0a5a"/><circle cx="973.20" cy="603.93" r="3.05" fill="#ff0000"/><circle cx="973.20" cy="603.93" r="0.9" fill="#9a0a5a"/><circle cx="980.89" cy="603.93" r="3.05" fill="#ff0000"/><circle cx="980.89" cy="603.93" r="0.9" fill="#9a0a5a"/><circle cx="988.33" cy="603.93" r="3.05" fill="#ff0000"/><circle cx="988.33" cy="603.93" r="0.9" fill="#9a0a5a"/><circle cx="988.67" cy="603.93" r="3.05" fill="#ff0000"/><circle cx="988.67" cy="603.93" r="0.9" fill="#9a0a5a"/><circle cx="988.67" cy="603.93" r="3.05" fill="#ff0000"/><circle cx="988.67" cy="603.93" r="0.9" fill="#9a0a5a"/><circle cx="988.67" cy="603.93" r="3.05" fill="#ff0000"/><circle cx="988.67" cy="603.93" r="0.9" fill="#9a0a5a"/><circle cx="988.67" cy="603.93" r="3.05" fill="#ff0000"/><circle cx="988.67" cy="603.93" r="0.9" fill="#9a0a5a"/><circle cx="987.71" cy="603.93" r="3.05" fill="#ff0000"/><circle cx="987.71" cy="603.93" r="0.9" fill="#9a0a5a"/><circle cx="984.35" cy="603.93" r="3.05" fill="#ff0000"/><circle cx="984.35" cy="603.93" r="0.9" fill="#9a0a5a"/><circle cx="978.73" cy="603.93" r="3.05" fill="#ff0000"/><circle cx="978.73" cy="603.93" r="0.9" fill="#9a0a5a"/><circle cx="971.15" cy="603.93" r="3.05" fill="#ff0000"/><circle cx="971.15" cy="603.93" r="0.9" fill="#9a0a5a"/><circle cx="962.00" cy="603.93" r="3.05" fill="#ff0000"/><circle cx="962.00" cy="603.93" r="0.9" fill="#9a0a5a"/><circle cx="952.02" cy="603.93" r="3.05" fill="#ff0000"/><circle cx="952.02" cy="603.93" r="0.9" fill="#9a0a5a"/><circle cx="949.70" cy="603.93" r="3.05" fill="#ff0000"/><circle cx="949.70" cy="603.93" r="0.9" fill="#9a0a5a"/><circle cx="953.86" cy="603.93" r="3.05" fill="#ff0000"/><circle cx="953.86" cy="603.93" r="0.9" fill="#9a0a5a"/><circle cx="876.41" cy="603.93" r="3.05" fill="#ff0000"/><circle cx="876.41" cy="603.93" r="0.9" fill="#9a0a5a"/><circle cx="873.91" cy="603.93" r="3.05" fill="#ff0000"/><circle cx="873.91" cy="603.93" r="0.9" fill="#9a0a5a"/><circle cx="867.04" cy="603.93" r="3.05" fill="#ff0000"/><circle cx="867.04" cy="603.93" r="0.9" fill="#9a0a5a"/><circle cx="857.37" cy="603.93" r="3.05" fill="#ff0000"/><circle cx="857.37" cy="603.93" r="0.9" fill="#9a0a5a"/><circle cx="847.11" cy="603.93" r="3.05" fill="#ff0000"/><circle cx="847.11" cy="603.93" r="0.9" fill="#9a0a5a"/><circle cx="838.61" cy="603.93" r="3.05" fill="#ff0000"/><circle cx="838.61" cy="603.93" r="0.9" fill="#9a0a5a"/><circle cx="833.86" cy="603.93" r="3.05" fill="#ff0000"/><circle cx="833.86" cy="603.93" r="0.9" fill="#9a0a5a"/><circle cx="833.92" cy="603.93" r="3.05" fill="#ff0000"/><circle cx="833.92" cy="603.93" r="0.9" fill="#9a0a5a"/><circle cx="838.77" cy="603.93" r="3.05" fill="#ff0000"/><circle cx="838.77" cy="603.93" r="0.9" fill="#9a0a5a"/><circle cx="847.34" cy="603.93" r="3.05" fill="#ff0000"/><circle cx="847.34" cy="603.93" r="0.9" fill="#9a0a5a"/><circle cx="857.62" cy="603.93" r="3.05" fill="#ff0000"/><circle cx="857.62" cy="603.93" r="0.9" fill="#9a0a5a"/><circle cx="867.26" cy="603.93" r="3.05" fill="#ff0000"/><circle cx="867.26" cy="603.93" r="0.9" fill="#9a0a5a"/><circle cx="874.02" cy="603.93" r="3.05" fill="#ff0000"/><circle cx="874.02" cy="603.93" r="0.9" fill="#9a0a5a"/><path d="M638.4 399.4V681.2H1122.6" stroke="#38b038" stroke-width="1.2" fill="none"/><path d="M638.4 399.4V681.2H1122.6" stroke="#0000ff" stroke-width="2.1" fill="none" stroke-dasharray="6 2 2 2"/></svg>
<div style="position:absolute;left:631.00px;top:96.00px;width:1.60px;height:281.80px;background:#bdbdbd;"></div>
<div style="position:absolute;left:631.00px;top:376.60px;width:486.00px;height:1.60px;background:#bdbdbd;"></div>
<div style="position:absolute;left:631.00px;top:403.30px;width:1.60px;height:281.50px;background:#bdbdbd;"></div>
<div style="position:absolute;left:631.00px;top:683.60px;width:486.00px;height:1.60px;background:#bdbdbd;"></div>
<div class="t" style="left:629.60px;top:73.00px;font-size:12px;line-height:12px;color:#000;font-weight:bold;transform:scaleX(1.062);">Y</div>
<div class="t" style="left:629.60px;top:385.00px;font-size:12px;line-height:12px;color:#000;font-weight:bold;transform:scaleX(1.143);">Z</div>
<div class="t" style="left:1125.90px;top:367.00px;font-size:12px;line-height:12px;color:#000;font-weight:bold;transform:scaleX(1.137);">X</div>
<div class="t" style="left:1125.90px;top:675.00px;font-size:12px;line-height:12px;color:#000;font-weight:bold;transform:scaleX(1.137);">X</div>
<div style="position:absolute;left:1108.70px;top:68.60px;width:26.40px;height:26.90px;box-sizing:border-box;background:#f2f2f2;border:1px solid #dcdcdc;border-bottom-color:#c4c4c4;border-radius:5px;"></div>
<svg style="position:absolute;left:1108.7px;top:68.6px;" width="26.4" height="26.9" viewBox="0 0 26.4 26.9"><circle cx="10.6" cy="10.6" r="6" fill="none" stroke="#000" stroke-width="2"/><path d="M7.8 10.6h5.6" stroke="#000" stroke-width="2"/><path d="M15 15l5.2 5.2" stroke="#000" stroke-width="2.4" stroke-linecap="round"/></svg>
</body></html>
